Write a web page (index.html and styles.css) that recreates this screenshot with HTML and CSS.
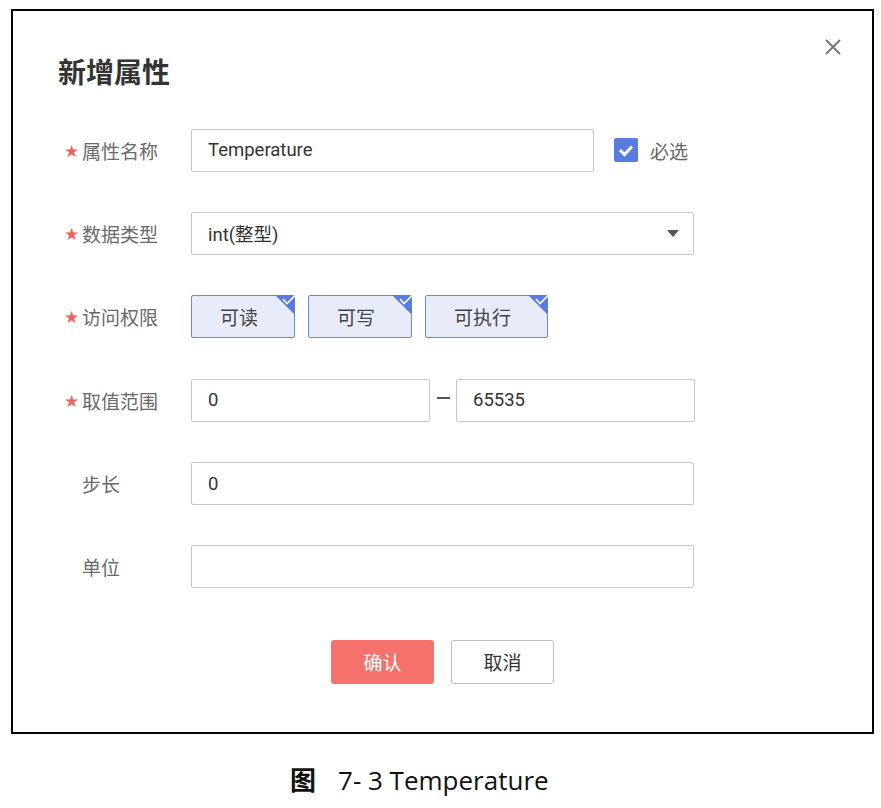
FILE: index.html
```html
<!DOCTYPE html>
<html lang="zh-CN">
  <head>
    <meta charset="UTF-8" />
    <meta name="viewport" content="width=device-width, initial-scale=1.0" />
    <title>新增属性</title>
    <link rel="stylesheet" href="styles.css">
  </head>
  <body>
    <div class="frame">
      <div class="dialog">
        <span class="close">
          <svg width="18" height="18" viewBox="0 0 18 18">
            <path d="M2 2 L16 16 M16 2 L2 16" stroke="#777" stroke-width="2" fill="none" />
          </svg>
        </span>
        <h1 class="title">新增属性</h1>

        <div class="form">
          <div class="row">
            <label class="label"><span class="star">★</span>属性名称</label>
            <div class="field">
              <input class="input short" type="text" value="Temperature" />
              <span class="check">
                <svg width="24" height="24" viewBox="0 0 24 24">
                  <rect width="24" height="24" rx="2" fill="#5a7ce2" />
                  <path d="M6 12 L10.5 16.5 L18 8.5" stroke="#fff" stroke-width="3" fill="none" />
                </svg>
              </span>
              <span class="check-text">必选</span>
            </div>
          </div>

          <div class="row">
            <label class="label"><span class="star">★</span>数据类型</label>
            <div class="field">
              <div class="input select">
                <span>int(整型)</span>
                <span class="arrow"></span>
              </div>
            </div>
          </div>

          <div class="row">
            <label class="label"><span class="star">★</span>访问权限</label>
            <div class="field tags">
              <span class="tag w104">可读<svg class="corner" width="20" height="20" viewBox="0 0 20 20"><path d="M0 0 H20 V20 Z" fill="#5a7ce2" /><path d="M8 4 L12 8.5 L20 0.5" stroke="#fff" stroke-width="1.6" fill="none" /></svg></span>
              <span class="tag w104">可写<svg class="corner" width="20" height="20" viewBox="0 0 20 20"><path d="M0 0 H20 V20 Z" fill="#5a7ce2" /><path d="M8 4 L12 8.5 L20 0.5" stroke="#fff" stroke-width="1.6" fill="none" /></svg></span>
              <span class="tag w123">可执行<svg class="corner" width="20" height="20" viewBox="0 0 20 20"><path d="M0 0 H20 V20 Z" fill="#5a7ce2" /><path d="M8 4 L12 8.5 L20 0.5" stroke="#fff" stroke-width="1.6" fill="none" /></svg></span>
            </div>
          </div>

          <div class="row">
            <label class="label"><span class="star">★</span>取值范围</label>
            <div class="field range">
              <input class="input half" type="text" value="0" />
              <span class="dash"></span>
              <input class="input half" type="text" value="65535" />
            </div>
          </div>

          <div class="row">
            <label class="label">步长</label>
            <div class="field">
              <input class="input" type="text" value="0" />
            </div>
          </div>

          <div class="row">
            <label class="label">单位</label>
            <div class="field">
              <input class="input" type="text" value="" />
            </div>
          </div>
        </div>

        <div class="buttons">
          <button class="btn primary">确认</button>
          <button class="btn">取消</button>
        </div>
      </div>
    </div>

    <p class="caption"><span class="fig">图</span>7- 3 Temperature</p>
  </body>
</html>
```

FILE: styles.css
```css
body {
  margin: 0;
  padding: 0;
  background-color: #fff;
  font-family: Roboto, "Noto Sans CJK SC", sans-serif;
  color: #333;
}

.frame {
  margin: 9px 0 0 11px;
  width: 859px;
  height: 721px;
  border: 2px solid #000;
}

.dialog {
  position: relative;
  padding: 40px 0 0 45px;
}

.close {
  position: absolute;
  top: 27px;
  right: 30px;
  width: 18px;
  height: 18px;
}

.close svg {
  display: block;
}

.title {
  margin: 0;
  font-family: "Noto Sans CJK SC", sans-serif;
  font-size: 28px;
  font-weight: 700;
  line-height: 40px;
  color: #333;
}

.form {
  margin-top: 38px;
  padding-left: 6px;
  display: flex;
  flex-direction: column;
  gap: 41.4px;
}

.row {
  display: flex;
  align-items: center;
  height: 42px;
}

.label {
  width: 127px;
  display: flex;
  align-items: center;
  padding-left: 18px;
  box-sizing: border-box;
  font-family: "Noto Sans CJK SC", sans-serif;
  font-size: 19px;
  color: #6a6a6a;
}

.star {
  margin-left: -18px;
  width: 18px;
  color: #e8665f;
  font-family: "DejaVu Sans", sans-serif;
  font-size: 17px;
  line-height: 1;
  position: relative;
  top: 1px;
}

.field {
  display: flex;
  align-items: center;
}

.input {
  width: 503px;
  height: 43px;
  box-sizing: border-box;
  border: 1px solid #c8c8c8;
  border-radius: 2px;
  padding: 0 16px;
  font-family: Roboto, "Noto Sans CJK SC", sans-serif;
  font-size: 18.5px;
  color: #333;
  background-color: #fff;
  outline: none;
}

.input.short {
  width: 403px;
}

.input.half {
  width: 239px;
}

.check {
  margin-left: 20px;
  width: 24px;
  height: 24px;
}

.check svg {
  display: block;
}

.check-text {
  margin-left: 12px;
  font-family: "Noto Sans CJK SC", sans-serif;
  font-size: 19px;
  color: #666;
}

.select {
  display: flex;
  align-items: center;
  justify-content: space-between;
  padding-right: 14px;
}

.arrow {
  width: 0;
  height: 0;
  border-left: 6px solid transparent;
  border-right: 6px solid transparent;
  border-top: 7px solid #555;
}

.tags {
  gap: 13px;
}

.tag {
  position: relative;
  height: 43px;
  box-sizing: border-box;
  display: flex;
  align-items: center;
  justify-content: center;
  border: 1px solid #6f88df;
  border-radius: 2px;
  background-color: #e8ecfa;
  font-family: "Noto Sans CJK SC", sans-serif;
  font-size: 19px;
  color: #444;
  padding-right: 8px;
}

.w104 {
  width: 104px;
}

.w123 {
  width: 123px;
}

.corner {
  position: absolute;
  top: -1px;
  right: -1px;
}

.range {
  gap: 0;
}

.dash {
  width: 13px;
  height: 2px;
  background-color: #555;
  margin: 0 6px 4px 7px;
}

.buttons {
  margin-top: 52px;
  display: flex;
  justify-content: center;
  gap: 17px;
  padding-right: 45px;
}

.btn {
  width: 103px;
  height: 44px;
  border: 1px solid #c0c0c0;
  border-radius: 3px;
  background-color: #fff;
  font-family: "Noto Sans CJK SC", sans-serif;
  font-size: 19px;
  color: #333;
}

.btn.primary {
  border-color: #f4716c;
  background-color: #f4716c;
  color: #fff;
}

.caption {
  margin: 26px 0 0 290px;
  font-family: "Open Sans", "Noto Sans CJK SC", sans-serif;
  font-size: 26px;
  color: #111;
}

.fig {
  font-family: "Noto Sans CJK SC", sans-serif;
  font-weight: 700;
  margin-right: 22px;
}
```
